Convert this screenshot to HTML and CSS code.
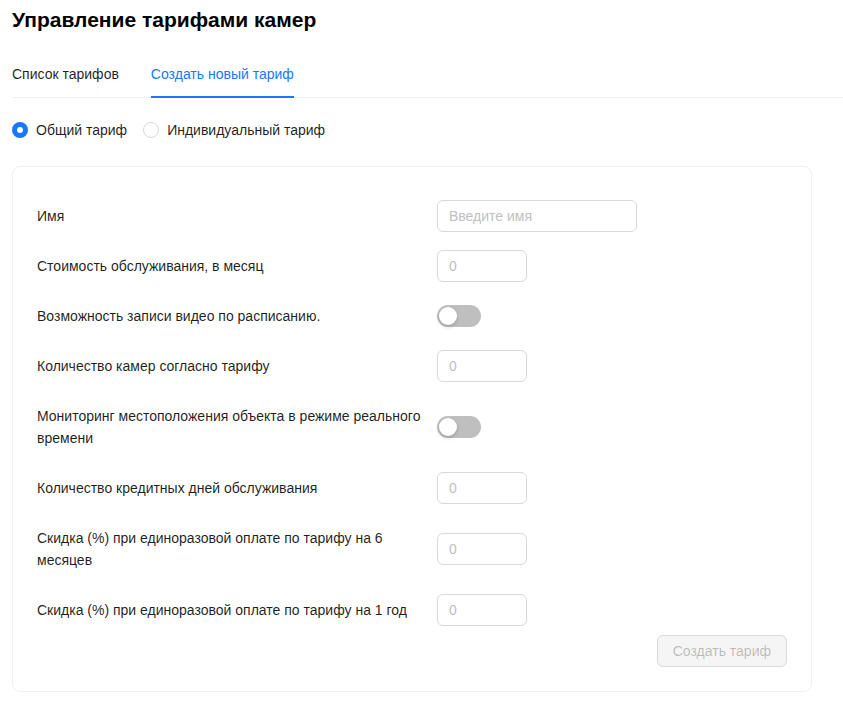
FILE: index.html
```html
<!DOCTYPE html>
<html lang="ru">
<head>
<meta charset="utf-8">
<title>Управление тарифами камер</title>
<link rel="stylesheet" href="styles.css">
</head>
<body>
<div class="page">
  <h1 class="title">Управление тарифами камер</h1>
  <div class="tabs">
    <div class="tab">Список тарифов</div>
    <div class="tab active">Создать новый тариф</div>
  </div>
  <div class="radios">
    <label class="radio checked"><span class="dot"></span>Общий тариф</label>
    <label class="radio"><span class="dot"></span>Индивидуальный тариф</label>
  </div>
  <div class="card">
    <div class="row">
      <div class="label">Имя</div>
      <div class="control"><div class="input wide">Введите имя</div></div>
    </div>
    <div class="row">
      <div class="label">Стоимость обслуживания, в месяц</div>
      <div class="control"><div class="input">0</div></div>
    </div>
    <div class="row">
      <div class="label">Возможность записи видео по расписанию.</div>
      <div class="control"><div class="switch"><span class="knob"></span></div></div>
    </div>
    <div class="row">
      <div class="label">Количество камер согласно тарифу</div>
      <div class="control"><div class="input">0</div></div>
    </div>
    <div class="row">
      <div class="label">Мониторинг местоположения объекта в режиме реального времени</div>
      <div class="control"><div class="switch"><span class="knob"></span></div></div>
    </div>
    <div class="row">
      <div class="label">Количество кредитных дней обслуживания</div>
      <div class="control"><div class="input">0</div></div>
    </div>
    <div class="row">
      <div class="label">Скидка (%) при единоразовой оплате по тарифу на 6 месяцев</div>
      <div class="control"><div class="input">0</div></div>
    </div>
    <div class="row last">
      <div class="label">Скидка (%) при единоразовой оплате по тарифу на 1 год</div>
      <div class="control"><div class="input">0</div></div>
    </div>
    <div class="actions">
      <button class="btn" disabled>Создать тариф</button>
    </div>
  </div>
</div>
</body>
</html>
```
FILE: styles.css
```css
* { box-sizing: border-box; }
html, body { margin: 0; padding: 0; background: #fff; }
body {
  font-family: "Liberation Sans", Arial, sans-serif;
  font-size: 14px;
  color: rgba(0,0,0,0.88);
}
.page { padding: 0 0 0 12px; }
.title {
  margin: 0;
  padding-top: 8px;
  font-size: 21px;
  line-height: 24px;
  font-weight: bold;
  color: #000;
}
.tabs {
  display: flex;
  gap: 32px;
  margin-top: 23px;
  border-bottom: 1px solid #f0f0f0;
}
.tab {
  padding: 8px 0 12px;
  line-height: 22px;
  font-size: 14px;
  color: rgba(0,0,0,0.88);
  position: relative;
}
.tab.active { color: #1677ff; }
.tab.active::after {
  content: "";
  position: absolute;
  left: 0; right: 0; bottom: -1px;
  height: 2px;
  background: #1677ff;
}
.radios {
  display: flex;
  gap: 16px;
  margin-top: 21px;
  line-height: 22px;
}
.radio {
  display: flex;
  align-items: center;
  gap: 8px;
  color: rgba(0,0,0,0.88);
}
.dot {
  width: 16px; height: 16px;
  border-radius: 50%;
  border: 1px solid #d9d9d9;
  background: #fff;
  display: inline-block;
}
.radio.checked .dot {
  border: 5px solid #1677ff;
  background: #fff;
}
.card {
  width: 800px;
  margin-top: 25px;
  border: 1px solid #f0f0f0;
  border-radius: 8px;
  padding: 33px 24px 24px;
}
.row {
  display: flex;
  align-items: center;
  margin-bottom: 18px;
}
.row.last { margin-bottom: 9px; }
.label {
  width: 400px;
  padding: 5px 16px 5px 0;
  line-height: 22px;
  color: rgba(0,0,0,0.88);
}
.control { flex: 1; display: flex; align-items: center; }
.input {
  width: 90px;
  height: 32px;
  border: 1px solid #d9d9d9;
  border-radius: 6px;
  padding: 0 11px;
  line-height: 30px;
  color: #bfbfbf;
}
.input.wide { width: 200px; }
.switch {
  width: 44px; height: 22px;
  border-radius: 11px;
  background: rgba(0,0,0,0.25);
  position: relative;
}
.knob {
  position: absolute;
  top: 2px; left: 2px;
  width: 18px; height: 18px;
  border-radius: 50%;
  background: #fff;
  box-shadow: 0 2px 4px rgba(0,35,11,0.2);
}
.actions { display: flex; justify-content: flex-end; }
.btn {
  font-family: inherit;
  font-size: 14px;
  height: 32px;
  padding: 0 15px;
  border: 1px solid #d9d9d9;
  border-radius: 6px;
  background: #f5f5f5;
  color: rgba(0,0,0,0.25);
}
```
